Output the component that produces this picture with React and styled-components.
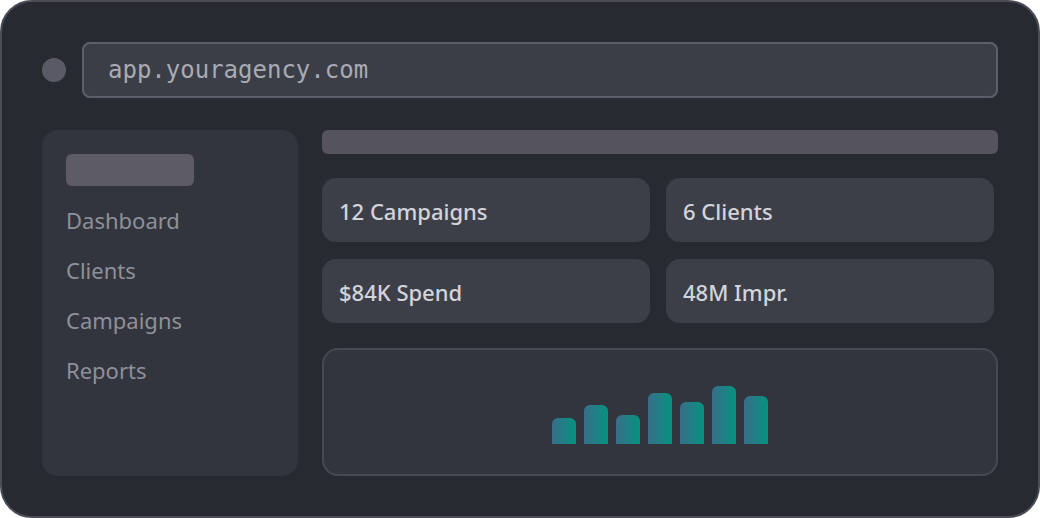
import styled, { createGlobalStyle } from 'styled-components'

const GlobalStyle = createGlobalStyle`
    html, body {
        margin: 0;
        padding: 0;
        background: #ffffff;
    }
    * {
        box-sizing: border-box;
    }
`

const Frame = styled.div`
    width: 1040px;
    height: 518px;
    display: flex;
    flex-direction: column;
    gap: 32px;
    padding: 40px;
    border: 2px solid #4b4c56;
    border-radius: 32px;
    background-color: #282a32;
    font-family: "Noto Sans", "Open Sans", sans-serif;
`

const Header = styled.div`
    display: flex;
    align-items: center;
    gap: 16px;
    height: 56px;
`

const Dot = styled.div`
    width: 24px;
    height: 24px;
    border-radius: 50%;
    background-color: #5a5a66;
`

const UrlBar = styled.div`
    flex: 1;
    height: 56px;
    display: flex;
    align-items: center;
    padding-left: 24px;
    border: 2px solid #5d606b;
    border-radius: 8px;
    background-color: #3c3e47;
    font-family: "DejaVu Sans Mono", "Liberation Mono", monospace;
    font-size: 24px;
    color: #a9abb3;
`

const Body = styled.div`
    flex: 1;
    display: flex;
    gap: 24px;
    min-height: 0;
`

const Sidebar = styled.div`
    width: 256px;
    display: flex;
    flex-direction: column;
    padding: 24px;
    border-radius: 16px;
    background-color: #33353e;
`

const Pill = styled.div`
    width: 128px;
    height: 32px;
    margin-bottom: 9px;
    border-radius: 6px;
    background-color: #5d5c66;
`

const NavItem = styled.div`
    height: 50px;
    display: flex;
    align-items: center;
    font-size: 22px;
    color: #8e909a;
`

const Main = styled.div`
    flex: 1;
    display: flex;
    flex-direction: column;
`

const TopBar = styled.div`
    height: 24px;
    margin-bottom: 24px;
    border-radius: 6px;
    background-color: #55535e;
`

const Stats = styled.div`
    display: grid;
    grid-template-columns: 328px 328px;
    grid-auto-rows: 64px;
    column-gap: 16px;
    row-gap: 17px;
    margin-bottom: 25px;
`

const Card = styled.div`
    display: flex;
    align-items: center;
    padding: 2px 0 0 17px;
    border-radius: 14px;
    background-color: #3d3f48;
    font-size: 22px;
    font-weight: 500;
    color: #d2d4da;
`

const Chart = styled.div`
    flex: 1;
    display: flex;
    justify-content: center;
    align-items: flex-end;
    gap: 8px;
    padding-bottom: 30px;
    border: 2px solid #464852;
    border-radius: 16px;
    background-color: #33353e;
`

const Bar = styled.div`
    width: 24px;
    height: ${props => props.h}px;
    border-radius: 6px 6px 0 0;
    background: linear-gradient(90deg, #3a6d89, #05937f);
`

const nav = ['Dashboard', 'Clients', 'Campaigns', 'Reports']
const stats = ['12 Campaigns', '6 Clients', '$84K Spend', '48M Impr.']
const bars = [26, 39, 29, 51, 42, 58, 48]

export default function App() {
    return (
        <>
            <GlobalStyle />
            <Frame>
                <Header>
                    <Dot />
                    <UrlBar>app.youragency.com</UrlBar>
                </Header>
                <Body>
                    <Sidebar>
                        <Pill />
                        {nav.map(item => <NavItem key={item}>{item}</NavItem>)}
                    </Sidebar>
                    <Main>
                        <TopBar />
                        <Stats>
                            {stats.map(s => <Card key={s}>{s}</Card>)}
                        </Stats>
                        <Chart>
                            {bars.map((h, i) => <Bar key={i} h={h} />)}
                        </Chart>
                    </Main>
                </Body>
            </Frame>
        </>
    )
}
